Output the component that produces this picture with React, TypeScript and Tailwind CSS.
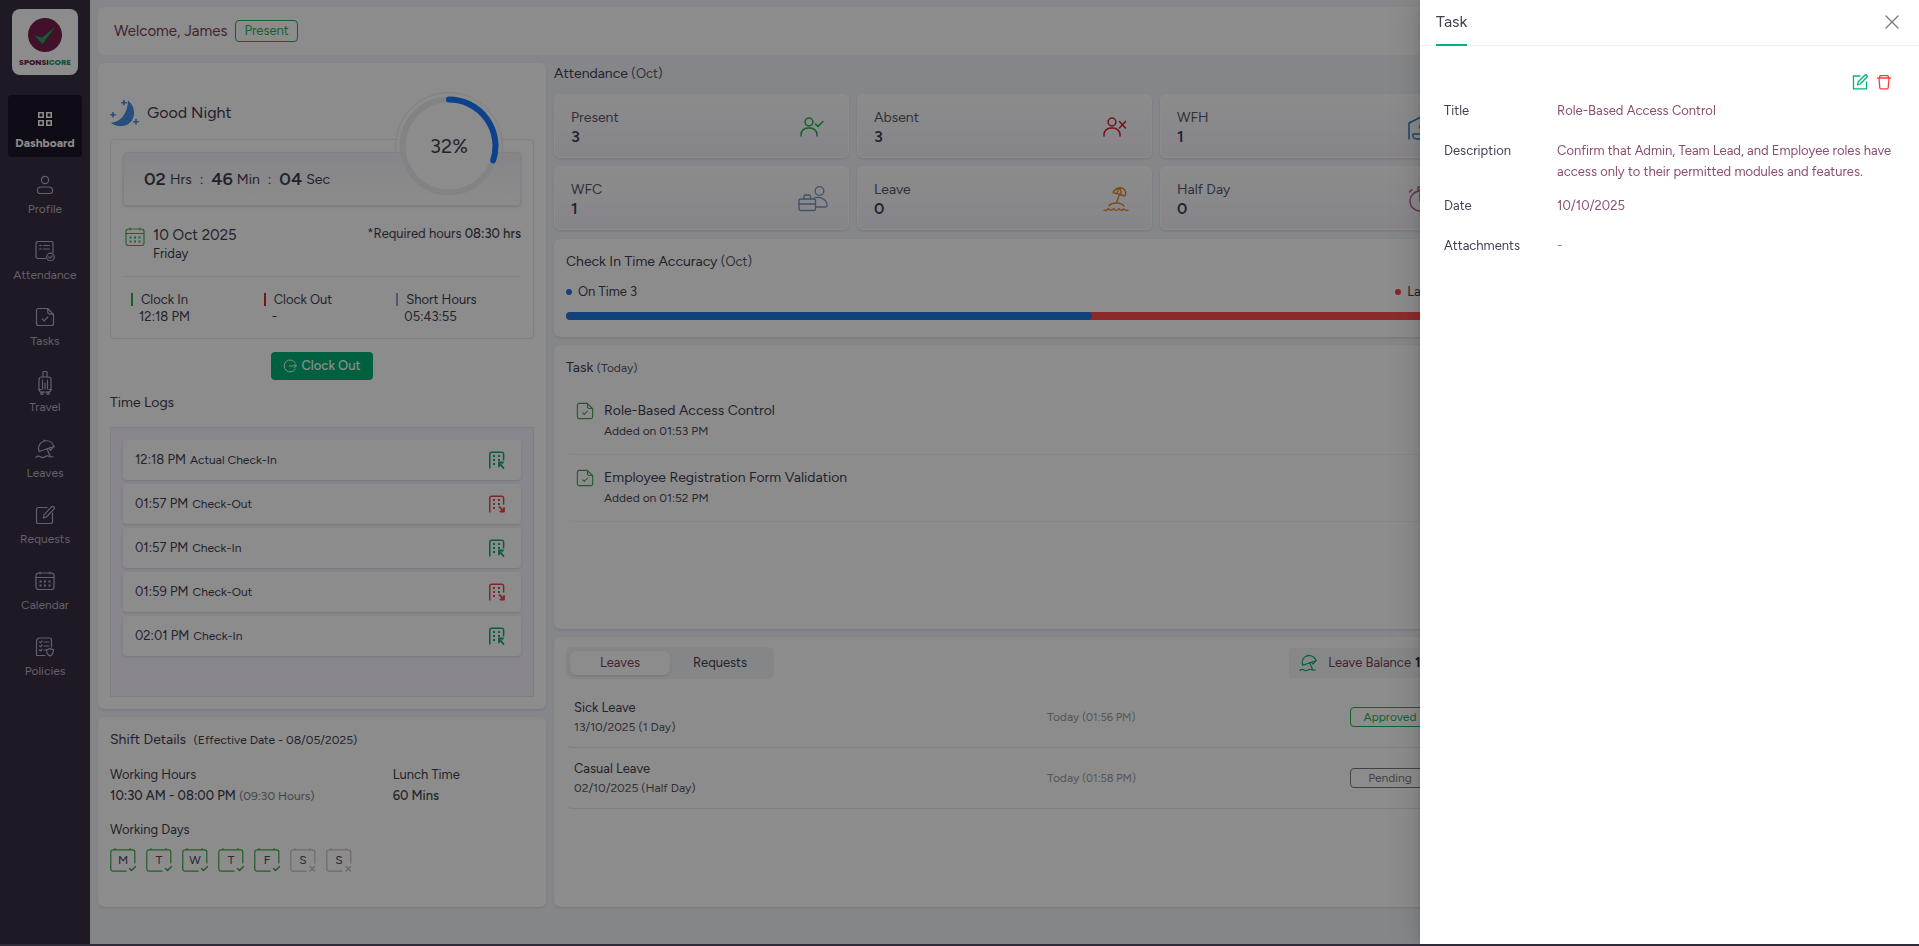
import React from "react";

type IconProps = { className?: string; children: React.ReactNode; box?: string; w?: number; h?: number; sw?: number };

function Glyph({ className = "", children, box = "0 0 20 20", w = 20, h = 20, sw = 1.2 }: IconProps) {
  return (
    <svg aria-hidden="true" width={w} height={h} viewBox={box} fill="none" stroke="currentColor" strokeWidth={sw} strokeLinecap="round" strokeLinejoin="round" className={"shrink-0 " + className}>
      {children}
    </svg>
  );
}

const calendarPaths = (
  <>
    <rect x="1" y="2" width="18" height="16.5" rx="2.5" />
    <path d="M1 6.500h18M5 1v2M15 1v2" />
    <path strokeWidth="2" strokeLinecap="butt" d="M4.500 10.500h2M9 10.500h2M13.500 10.500h2M4.500 14.500h2M9 14.500h2M13.500 14.500h2" />
  </>
);

const taskPaths = (
  <>
    <path d="M12.500 1.500H3.500a2 2 0 0 0-2 2v13a2 2 0 0 0 2 2h13a2 2 0 0 0 2-2V7.500z" />
    <path d="M12.800 1.800v3.400a2 2 0 0 0 2 2h3.500" />
    <path d="M7.200 12l2 1.800 3.600-3.800" />
  </>
);

const umbrellaPaths = (
  <>
    <path d="M4 12.500C2.500 7 5 3 9.500 2c4-.8 8 1.200 9.500 5.500L4 12.500z" />
    <path d="M9.300 2l-.3-1M12 9.800l3 7.200M14 9.200l1.500 2.200 3.500-4" />
    <path d="M1 18.300c1.500-1.500 3-1.500 4.500-.5s3 1 4.500 0 3-1.300 4.500-.3 2 .6 3.500 0" />
  </>
);

const dashboardIcon = (
  <Glyph w={16} h={16} box="0 0 16 16" sw={1.6}>
    <path strokeLinejoin="miter" d="M1.800 1.800h4.400v4.400H1.800zM9.800 1.800h4.400v4.400H9.800zM1.800 9.800h4.400v4.400H1.800zM9.800 9.800h4.400v4.400H9.800z" />
  </Glyph>
);

const nav = [
  { label: "Dashboard", icon: dashboardIcon },
  { label: "Profile", icon: <Glyph><circle cx="10" cy="5" r="3.600" /><path d="M6 12h8a3.500 3.500 0 0 1 3.500 3.500v.5a2.500 2.500 0 0 1-2.500 2.500H5A2.500 2.500 0 0 1 2.500 16v-.5A3.500 3.500 0 0 1 6 12z" /></Glyph> },
  { label: "Attendance", icon: <Glyph><path d="M11 17.500H3a2 2 0 0 1-2-2v-13a2 2 0 0 1 2-2h13a2 2 0 0 1 2 2v9M4.500 4.500h2M8.500 4.500h6M4.500 8h2M8.500 8h6" /><circle cx="15.500" cy="16" r="3.800" /><path d="M13.800 16l1.200 1.200 2.200-2.400" /></Glyph> },
  { label: "Tasks", icon: <Glyph>{taskPaths}</Glyph> },
  { label: "Travel", icon: <Glyph w={20} h={24} box="0 0 20 24"><rect x="4" y="6" width="12" height="15" rx="2.500" /><path d="M8 6V1.500a1 1 0 0 1 1-1h2a1 1 0 0 1 1 1V6M7.500 9v9M10 12v6M12.500 9v9M4 18.500h2M14 18.500h2" /><circle cx="7" cy="22.300" r="1.200" /><circle cx="13" cy="22.300" r="1.200" /></Glyph> },
  { label: "Leaves", icon: <Glyph>{umbrellaPaths}</Glyph> },
  { label: "Requests", icon: <Glyph><path d="M12 2.500H3.500a2 2 0 0 0-2 2v12a2 2 0 0 0 2 2h12a2 2 0 0 0 2-2V8" /><path d="M9 9.800L16.500 1.800a1.700 1.700 0 0 1 2.400 2.400L11.500 12l-3.200 1z" /></Glyph> },
  { label: "Calendar", icon: <Glyph>{calendarPaths}</Glyph> },
  { label: "Policies", icon: <Glyph><path d="M10 18.500H1.500v-14a3.500 3.500 0 0 1 3-3.500h10a2 2 0 0 1 2 2v7M4.500 4.800l1 1 1.500-1.800M9 5h5M4.500 8.800l1 1L7 8M9 9h5M4.500 13l1 1L7 12.200M9 13h1.500" /><path d="M15 11.500c1 .8 2.200 1.200 3.500 1.200 0 3-.8 5-3.500 6.300-2.700-1.300-3.500-3.300-3.500-6.300 1.300 0 2.500-.4 3.500-1.200z" /></Glyph> },
];

function Sidebar() {
  return (
    <aside className="w-[90px] shrink-0 bg-[#372f43] pt-[9px]">
      <div className="mx-auto flex h-[66px] w-[66px] flex-col items-center rounded-lg bg-white pt-2">
        <svg aria-hidden="true" width="36" height="36" viewBox="0 0 36 36">
          <circle cx="18" cy="18" r="17" fill="#761f4c" />
          <path d="M7.500 18.500l7.500 2.200L28.500 9.500 15.500 27z" fill="#1fa765" />
        </svg>
        <div className="text-[8px] leading-[18px] font-black text-[#761f4c]">
          SPONSI<span className="text-[#1fa765]">CORE</span>
        </div>
      </div>
      <nav className="mt-5 flex flex-col gap-1 px-2">
        {nav.map((n, i) => (
          <a key={n.label} href="#" className={i === 0 ? "flex h-[62px] flex-col items-center rounded-sm bg-[#1e1729] pt-3 text-white" : "flex h-[62px] flex-col items-center rounded-sm pt-3 text-[#b5b1bf]"}>
            <span className="flex h-6 items-center">{n.icon}</span>
            <span className={i === 0 ? "text-[12px] leading-6 font-bold" : "text-[12px] leading-6"}>{n.label}</span>
          </a>
        ))}
      </nav>
    </aside>
  );
}

function BuildingIcon({ out }: { out: boolean }) {
  return (
    <Glyph w={18} h={18} box="0 0 18 18" sw={1.5} className={out ? "text-[#e5484d]" : "text-[#0fab6c]"}>
      <path d="M1.800 17V3a1.800 1.800 0 0 1 1.800-1.800h10.200A1.800 1.800 0 0 1 15.600 3v6" />
      <path strokeWidth="2" strokeLinecap="butt" d="M5 5h2M10 5h2M5 9h2M10 9h2M5 13h2" />
      {out ? <path strokeWidth="1.800" d="M11.500 12l4.500 4.500M16 12.800v3.700h-3.700" /> : <path strokeWidth="1.800" d="M15.500 17l-4.300-5M11 15.500v-4h4" />}
    </Glyph>
  );
}

const logs = [
  { time: "12:18 PM", kind: "Actual Check-In", out: false },
  { time: "01:57 PM", kind: "Check-Out", out: true },
  { time: "01:57 PM", kind: "Check-In", out: false },
  { time: "01:59 PM", kind: "Check-Out", out: true },
  { time: "02:01 PM", kind: "Check-In", out: false },
];

const clock = [
  { label: "Clock In", value: "12:18 PM", bar: "bg-[#22b14c]" },
  { label: "Clock Out", value: "-", bar: "bg-[#d9272e]" },
  { label: "Short Hours", value: "05:43:55", bar: "bg-[#8ea3c8]" },
];

function TimeCard() {
  return (
    <section className="rounded-md bg-white px-3 pt-9 pb-3 shadow-sm">
      <div className="flex h-7 items-center gap-2">
        <svg aria-hidden="true" width="29" height="28" viewBox="0 0 29 28" fill="#4a90e2">
          <path d="M18 1.500c6.500 5 8 14 3.500 20.500S7 28.500.800 24C10 23 17.500 15.500 18 1.500z" />
          <path d="M13.200 1h1.600v2h2v1.600h-2v2h-1.600v-2h-2V3h2zM2.200 13h1.600v2h2v1.600h-2v2H2.200v-2h-2V15h2zM25.200 20h1.600v2h2v1.600h-2v2h-1.600v-2h-2V22h2z" />
        </svg>
        <h2 className="text-[16px] leading-6">Good Night</h2>
      </div>
      <div className="relative mt-3 rounded-sm border border-[#e9e9f1] px-3 pt-3 pb-[13px]">
        <div className="absolute -top-12 right-[30px] h-[108px] w-[108px] rounded-full border border-[#e9e9f1] bg-white" />
        <div className="relative flex h-[54px] items-center rounded-sm border border-[#e9e9f4] bg-linear-to-b from-[#f3f2fb] to-white pl-5 shadow-sm">
          <div className="flex items-center gap-1 text-[14px]">
            <b className="text-[18px] font-semibold">02</b><span>Hrs</span><span className="mx-1">:</span>
            <b className="text-[18px] font-semibold">46</b><span>Min</span><span className="mx-1">:</span>
            <b className="text-[18px] font-semibold">04</b><span>Sec</span>
          </div>
        </div>
        <div className="absolute -top-11 right-[34px] flex h-[100px] w-[100px] items-center justify-center rounded-full bg-white">
          <svg aria-hidden="true" className="absolute inset-0" width="100" height="100" viewBox="0 0 100 100" fill="none" strokeWidth="6">
            <circle cx="50" cy="50" r="46.500" stroke="#efeff4" />
            <path d="M50 3.500A46.500 46.500 0 0 1 94.200 64.400" stroke="#1677ff" strokeLinecap="round" />
          </svg>
          <span className="text-[20px]">32%</span>
        </div>
        <div className="mt-[19px] flex items-start border-b border-[#e9e9f1] pb-[13px] pl-0.5">
          <Glyph className="mt-[2px] text-[#4caf50]">{calendarPaths}</Glyph>
          <div className="ml-2 flex-1">
            <div className="text-[15px] leading-5">10 Oct 2025</div>
            <div className="text-[13px] leading-[18px]">Friday</div>
          </div>
          <div className="text-[13px] leading-[18px]">*Required hours <span className="font-medium">08:30 hrs</span></div>
        </div>
        <div className="-mr-2 mt-[14px] grid grid-cols-3 pl-2 text-[13px] leading-[17px]">
          {clock.map((c) => (
            <div key={c.label}>
              <div className="flex items-center gap-2"><span className={"h-[13px] w-0.5 " + c.bar} />{c.label}</div>
              <div className="pl-2">{c.value}</div>
            </div>
          ))}
        </div>
      </div>
      <button type="button" className="mx-auto mt-[13px] flex h-7 items-center gap-1 rounded-sm bg-[#00b074] px-3 text-[13px] font-medium text-white">
        <Glyph w={14} h={14} box="0 0 14 14" sw={1}><path d="M12.400 4A6 6 0 1 0 12.400 10M6.500 7h6.800M11.500 5.200L13.300 7l-1.800 1.800" /></Glyph>
        Clock Out
      </button>
      <h3 className="mt-3 text-[14px] leading-[22px]">Time Logs</h3>
      <ul className="mt-[13px] flex h-[270px] flex-col gap-1 border border-[#e9e9f1] bg-[#f7f5ff] p-3">
        {logs.map((l, i) => (
          <li key={i} className="flex h-10 items-center gap-1 rounded-sm bg-white pr-[15px] pl-3 shadow-sm">
            <span className="text-[13px]">{l.time}</span>
            <span className="flex-1 text-[12px]">{l.kind}</span>
            <BuildingIcon out={l.out} />
          </li>
        ))}
      </ul>
    </section>
  );
}

function ShiftCard() {
  return (
    <section className="h-[190px] rounded-md bg-white px-3 pt-3 shadow-sm">
      <h3 className="text-[14px] leading-[22px]">Shift Details <span className="ml-1 text-[12px]">(Effective Date - 08/05/2025)</span></h3>
      <div className="mt-[13px] grid grid-cols-3 text-[13px] leading-[21px]">
        <div className="col-span-2">Working Hours<br /><span className="font-medium">10:30 AM - 08:00 PM</span> <span className="text-[12px] text-[#7d7d86]">(09:30 Hours)</span></div>
        <div>Lunch Time<br /><span className="font-medium">60 Mins</span></div>
      </div>
      <div className="mt-3 text-[13px] leading-[21px]">Working Days</div>
      <div className="mt-2 flex gap-[10px]">
        {["M", "T", "W", "T", "F", "S", "S"].map((d, i) => (
          <span key={i} className={i < 5 ? "relative flex h-6 w-[26px] items-center justify-center text-[#3fa845]" : "relative flex h-6 w-[26px] items-center justify-center text-[#c4c4c8]"}>
            <Glyph w={26} h={24} box="0 0 26 24" className="absolute inset-0">
              <path d="M16 23.200H3a2.200 2.200 0 0 1-2.200-2.200V4A2.200 2.200 0 0 1 3 1.800h19.600A2.200 2.200 0 0 1 24.800 4v11M5 .6v1M20 .6v1" />
              {i < 5 ? <path strokeWidth="1.500" d="M19.500 20.500l2 2 4-4" /> : <path strokeWidth="1.500" d="M20 18.500l4.500 4.500M24.500 18.500L20 23" />}
            </Glyph>
            <span className="text-[12px] text-[#4b4658]">{d}</span>
          </span>
        ))}
      </div>
    </section>
  );
}

const person = <><circle cx="9" cy="5" r="3.900" /><path d="M1 19v-1.500A6.800 6.800 0 0 1 7.800 11h2.400a6.800 6.800 0 0 1 6.800 6.500V19" /></>;

const stats = [
  { label: "Present", value: "3", icon: <Glyph w={24} h={20} box="0 0 24 20" sw={1.500} className="mr-2 text-[#22b14c]">{person}<path d="M15.500 7l2.500 2.500L23 4.500" /></Glyph> },
  { label: "Absent", value: "3", icon: <Glyph w={24} h={20} box="0 0 24 20" sw={1.500} className="mr-2 text-[#d9202a]">{person}<path d="M16.500 4.500l6 6.500M22.500 4.500l-6 6.500" /></Glyph> },
  { label: "WFH", value: "1", icon: <Glyph w={30} h={26} box="0 0 30 26" sw={1.500} className="text-[#2f7fb5]"><path d="M1 25V9l14-7 14 7v16M5 20h9c4 0 4-3 7-5M5 20c-1 3 1 5 4 5h12M12 14a4 4 0 0 1 8-2" /></Glyph> },
  { label: "WFC", value: "1", icon: <Glyph w={30} h={26} box="0 0 30 26" className="mr-1 text-[#7195c0]" sw={1.300}><rect x="1" y="13" width="16.500" height="11.500" rx="1.500" /><path d="M1 18h16.500M6 13v-2.500a1.500 1.500 0 0 1 1.500-1.500h3.500a1.500 1.500 0 0 1 1.500 1.500V13M16 12c6.500-2 13 1.500 13 7.500a1.500 1.500 0 0 1-1.500 1.500h-10" /><circle cx="21.500" cy="5" r="4.300" /></Glyph> },
  { label: "Leave", value: "0", icon: <Glyph w={26} h={26} box="0 0 26 26" className="mr-1.5 text-[#e08a2c]" sw={1.400}><path d="M10 6.500C12.500 1.500 18 .5 21.500 3.500c1.500 2 1.300 4.500.3 6.500zM16 2l-2 5.500M16 2c2 1.500 2.500 4 1.500 6.500M16.500 8L13.500 17M6 19.500c3.500-3.500 12-3.500 15 .5M1 24.500c2 .5 3.500-.5 4.500-2 1 2 3.500 2.500 5 0 1.500 2.500 4 2.500 5.500 0 1 2 3 2.500 4.500.5 1.500 1.500 3 1.500 4.500 1.500" /></Glyph> },
  { label: "Half Day", value: "0", icon: <Glyph w={26} h={26} box="0 0 26 26" className="mr-1 text-[#b0608a]" sw={1.400}><circle cx="12" cy="15" r="10" /><path d="M10 1h5v3h-5zM1.500 6l2.500-2.500M12 15V7M20 4l2 2" /></Glyph> },
];

const tasks = [
  { title: "Role-Based Access Control", added: "Added on 01:53 PM" },
  { title: "Employee Registration Form Validation", added: "Added on 01:52 PM" },
];

const leaves = [
  { type: "Sick Leave", date: "13/10/2025 (1 Day)", time: "(01:56 PM)", status: "Approved", tone: "border-[#1fb34f] text-[#1fb34f]" },
  { type: "Casual Leave", date: "02/10/2025 (Half Day)", time: "(01:58 PM)", status: "Pending", tone: "border-[#7b7b80] text-[#7b7b80]" },
];

function MainColumn() {
  return (
    <div className="flex flex-col gap-2">
      <section>
        <h3 className="pb-[10px] text-[14px] leading-[21px]">Attendance <span className="text-[13px] text-[#5b5766]">(Oct)</span></h3>
        <div className="grid grid-cols-3 gap-2">
          {stats.map((s) => (
            <div key={s.label} className="flex h-[64px] items-center rounded-md border border-white bg-linear-to-b from-white to-[#f4f1fc] px-4 pt-0.5 shadow-sm">
              <div className="flex-1">
                <div className="text-[14px] leading-[19px] text-[#5b5766]">{s.label}</div>
                <div className="text-[16px] leading-5 font-semibold">{s.value}</div>
              </div>
              {s.icon}
            </div>
          ))}
        </div>
      </section>
      <section className="mt-px h-[98px] rounded-md bg-white px-3 pt-3 shadow-sm">
        <h3 className="text-[14px] leading-[21px]">Check In Time Accuracy <span className="text-[13px] text-[#5b5766]">(Oct)</span></h3>
        <div className="mt-[10px] flex justify-between text-[13px] leading-5">
          <span className="flex items-center gap-1.5"><i className="h-1.5 w-1.5 rounded-full bg-[#1f78dc]" />On Time 3</span>
          <span className="flex items-center gap-1.5"><i className="h-1.5 w-1.5 rounded-full bg-[#f5403f]" />Late 2</span>
        </div>
        <div className="mt-[10px] h-2 overflow-hidden rounded-full bg-[#ff4d4f]">
          <div className="h-2 w-3/5 rounded-full bg-[#1f78dc]" />
        </div>
      </section>
      <section className="h-[284px] rounded-md bg-white px-3 pt-3 shadow-sm">
        <h3 className="text-[14px] leading-[21px]">Task <span className="text-[12px] text-[#5b5766]">(Today)</span></h3>
        <ul className="mt-[9px]">
          {tasks.map((t) => (
            <li key={t.title} className="flex h-[67px] gap-[10px] rounded-md border-b border-[#f3f3f6] pt-3 pl-[10px]">
              <Glyph w={18} h={18} className="mt-[2px] text-[#43a047]">{taskPaths}</Glyph>
              <div>
                <a href="#" className="block text-[14px] leading-[22px]">{t.title}</a>
                <div className="text-[12px] leading-[19px] text-[#4f4a5c]">{t.added}</div>
              </div>
            </li>
          ))}
        </ul>
      </section>
      <section className="h-[270px] rounded-md bg-white px-3 pt-[10px] shadow-sm">
        <div className="flex items-center justify-between">
          <div className="flex rounded-md bg-[#f3f4f8] p-1 text-[13px] leading-6">
            <button type="button" className="w-[100px] rounded-md bg-white text-[#803d60] shadow-sm">Leaves</button>
            <button type="button" className="w-[100px]">Requests</button>
          </div>
          <button type="button" className="flex h-[30px] items-center rounded-sm border border-[#edf4f2] bg-[#f4f8f7] px-[9px] text-[13px] text-[#803d60]">
            <Glyph w={18} h={18} className="mr-[11px] text-[#00a86b]">{umbrellaPaths}</Glyph>
            Leave Balance <b className="ml-1 w-[18px] text-left text-[#372f43]">12</b>
          </button>
        </div>
        <ul className="mt-2">
          {leaves.map((l) => (
            <li key={l.type} className="grid h-[61px] grid-cols-[473fr_303fr_80px] items-center rounded-md border-b border-[#eaeaf0] pr-[13px] pl-2">
              <div>
                <div className="text-[13px] leading-5">{l.type}</div>
                <div className="text-[12px] leading-[18px] text-[#5b5766]">{l.date}</div>
              </div>
              <div className="text-[12px] text-[#9a9aa2]">Today <span className="text-[11px]">{l.time}</span></div>
              <span className={"rounded-sm border text-center text-[12px] leading-[18px] " + l.tone}>{l.status}</span>
            </li>
          ))}
        </ul>
      </section>
    </div>
  );
}

function TaskDrawer() {
  return (
    <div role="dialog" aria-label="Task" className="fixed inset-y-0 right-0 w-[26%] bg-white shadow-[-6px_0_16px_0_rgba(0,0,0,0.08),-3px_0_6px_-4px_rgba(0,0,0,0.12),-9px_0_28px_8px_rgba(0,0,0,0.05)]">
      <div className="flex h-[46px] items-start justify-between border-b border-[#f0f0f0] pr-5 pl-4">
        <h2 className="h-[46px] border-b-2 border-[#00b37c] text-[16px] leading-[44px]">Task</h2>
        <button type="button" aria-label="Close" className="flex h-11 items-center text-[#7d7d7d]">
          <Glyph w={14} h={14} box="0 0 14 14" sw={1.400}><path d="M1 1l12 12M13 1L1 13" /></Glyph>
        </button>
      </div>
      <div className="px-6 pt-7">
        <div className="flex justify-end gap-2 pr-[3px]">
          <button type="button" aria-label="Edit" className="text-[#00b37c]">
            <Glyph w={16} h={16} box="0 0 16 16" sw={1.300}><path strokeLinejoin="miter" d="M8 2H1.500v12.800h13V8" /><path d="M5.500 10.800l.7-3L12.800 1.300a1.300 1.300 0 0 1 2 2L8.200 10z" /></Glyph>
          </button>
          <button type="button" aria-label="Delete" className="text-[#f5403f]">
            <Glyph w={16} h={16} box="0 0 16 16" sw={1.300}><path d="M1.500 4h13M3 4l.8 10a1 1 0 0 0 1 .9h6.400a1 1 0 0 0 1-.9L13 4M3.500 3.600l.5-2h8l.5 2" /></Glyph>
          </button>
        </div>
        <dl className="mt-[10px] grid grid-cols-[113px_1fr] text-[13px] leading-[21px]">
          <dt>Title</dt>
          <dd className="mb-[19px] text-[#8b4d70]">Role-Based Access Control</dd>
          <dt>Description</dt>
          <dd className="mb-[13px] text-[#8b4d70]">Confirm that Admin, Team Lead, and Employee roles have access only to their permitted modules and features.</dd>
          <dt>Date</dt>
          <dd className="mb-[19px] text-[#8b4d70]">10/10/2025</dd>
          <dt>Attachments</dt>
          <dd className="text-[#8c8c8c]">-</dd>
        </dl>
      </div>
    </div>
  );
}

export default function App() {
  return (
    <div className="flex min-h-screen bg-[#f3f5fa] font-[family-name:Figtree,Lato,sans-serif] text-[#433d51]">
      <Sidebar />
      <main className="min-w-0 flex-1 px-2 pt-[7px]">
        <header className="flex h-12 items-center gap-2 rounded-md bg-white px-4">
          <h1 className="text-[15px] text-[#803d60]">Welcome, James</h1>
          <span className="rounded-sm border border-[#1fb34f] px-2 text-[13px] leading-5 text-[#1fb34f]">Present</span>
        </header>
        <div className="mt-2 grid grid-cols-[448fr_901fr_448fr] gap-2">
          <div className="flex flex-col gap-2">
            <TimeCard />
            <ShiftCard />
          </div>
          <MainColumn />
        </div>
      </main>
      <div className="fixed inset-0 bg-black/45" />
      <TaskDrawer />
      <div className="fixed inset-x-0 bottom-0 h-0.5 bg-[#2f2c36]" />
    </div>
  );
}
